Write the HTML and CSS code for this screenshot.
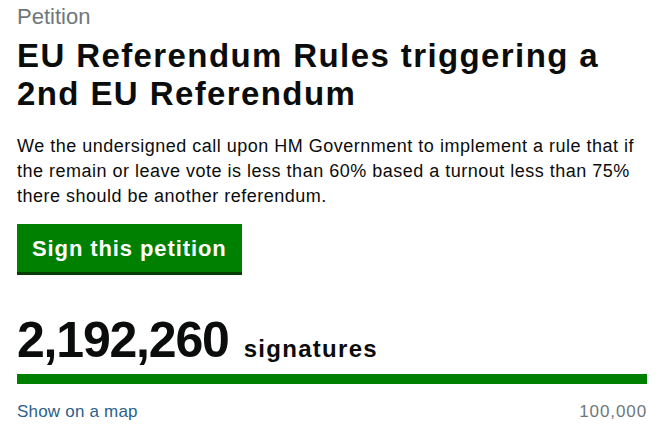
FILE: index.html
```html
<!DOCTYPE html>
<html lang="en">
<head>
<meta charset="utf-8">
<title>Petition</title>
<link rel="stylesheet" href="styles.css">
</head>
<body>
<main class="page">
  <span class="label">Petition</span>
  <h1 class="title">EU Referendum Rules triggering a 2nd EU Referendum</h1>
  <p class="lead">We the undersigned call upon HM Government to implement a rule that if the remain or leave vote is less than 60% based a turnout less than 75% there should be another referendum.</p>
  <a class="button" href="#">Sign this petition</a>
  <div class="count">
    <span class="count-number">2,192,260</span>
    <span class="count-label">signatures</span>
  </div>
  <div class="progress"><div class="progress-bar" style="width:100%"></div></div>
  <div class="meta">
    <a class="map-link" href="#">Show on a map</a>
    <span class="threshold">100,000</span>
  </div>
</main>
</body>
</html>
```

FILE: styles.css
```css
* { box-sizing: border-box; }
html, body { margin: 0; padding: 0; background: #fff; }
body {
  font-family: "Liberation Sans", Arial, sans-serif;
  color: #0b0c0c;
}
.page {
  width: 630px;
  margin-left: 17px;
  padding-top: 4px;
  display: flex;
  flex-direction: column;
  align-items: flex-start;
}
.label {
  display: block;
  font-size: 22px;
  line-height: 26px;
  color: #6f777b;
}
.title {
  margin: 7px 0 0;
  font-size: 33px;
  line-height: 38px;
  font-weight: bold;
  letter-spacing: 1.4px;
}
.lead {
  margin: 21px 0 0;
  font-size: 18px;
  line-height: 25px;
  letter-spacing: 0.5px;
}
.button {
  margin-top: 15px;
  display: inline-block;
  background: #008000;
  color: #fff;
  font-weight: bold;
  font-size: 22px;
  line-height: 26px;
  letter-spacing: 0.9px;
  padding: 12px 15px 10px 15px;
  border-bottom: 3px solid #073d07;
  text-decoration: none;
}
.count {
  margin-top: 39.5px;
  display: flex;
  align-items: baseline;
  gap: 15px;
}
.count-number {
  font-size: 50px;
  line-height: 50px;
  font-weight: bold;
  letter-spacing: -1.2px;
}
.count-label {
  font-size: 24px;
  line-height: 24px;
  font-weight: bold;
  letter-spacing: 1.3px;
}
.progress {
  margin-top: 9px;
  width: 100%;
  height: 10px;
  background: #dee0e2;
}
.progress-bar {
  height: 100%;
  background: #008000;
}
.meta {
  margin-top: 18px;
  width: 100%;
  display: flex;
  justify-content: space-between;
  font-size: 17px;
  line-height: 20px;
}
.map-link { color: #2b5f8c; text-decoration: none; letter-spacing: 0.2px; }
.threshold { color: #6f777b; letter-spacing: 0.9px; }
```
